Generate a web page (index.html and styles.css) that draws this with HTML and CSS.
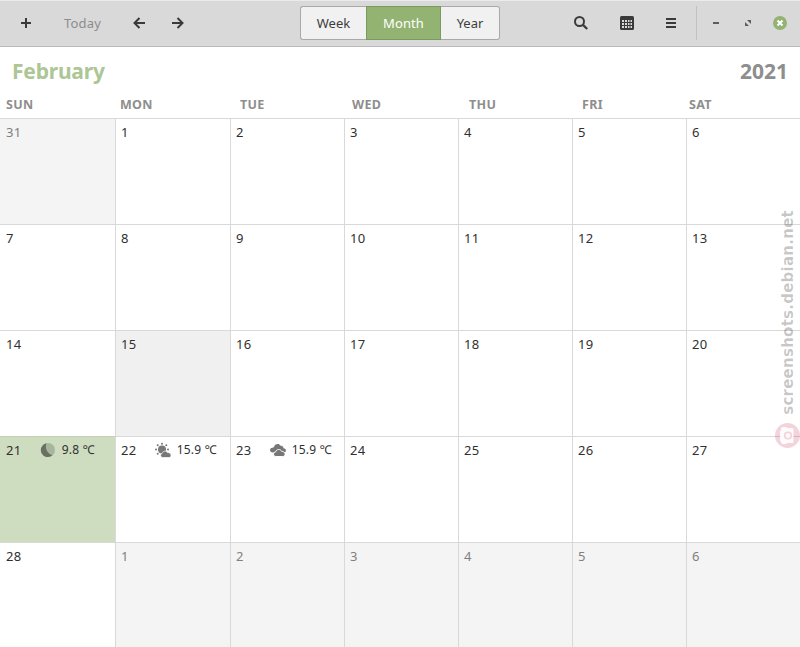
FILE: index.html
```html
<!DOCTYPE html>
<html lang="en">
<head>
    <meta charset="UTF-8">
    <meta name="viewport" content="width=device-width, initial-scale=1.0">
    <title>Calendar</title>
    <link rel="stylesheet" href="styles.css">
</head>
<body>
    <header class="toolbar">
        <div class="tools-left">
            <button class="icon-btn add" title="New event">
                <svg width="10" height="10" viewBox="0 0 10 10"><path d="M4 0h2v4h4v2H6v4H4V6H0V4h4z" fill="#3a3a3a"/></svg>
            </button>
            <button class="today">Today</button>
            <button class="icon-btn prev" title="Previous">
                <svg width="12" height="12" viewBox="0 0 12 12"><path d="M12 6H1.5M6.500 1L1.500 6l5 5" fill="none" stroke="#3a3a3a" stroke-width="2"/></svg>
            </button>
            <button class="icon-btn next" title="Next">
                <svg width="12" height="12" viewBox="0 0 12 12"><path d="M0 6h10.500M5.500 1l5 5-5 5" fill="none" stroke="#3a3a3a" stroke-width="2"/></svg>
            </button>
        </div>
        <div class="switcher">
            <button class="week">Week</button>
            <button class="month active">Month</button>
            <button class="year">Year</button>
        </div>
        <div class="tools-right">
            <button class="icon-btn search" title="Search">
                <svg width="14" height="14" viewBox="0 0 14 14"><circle cx="5.500" cy="5.500" r="4.500" fill="none" stroke="#3a3a3a" stroke-width="2"/><path d="M8.700 8.700l4.500 4.300" stroke="#3a3a3a" stroke-width="2.300"/></svg>
            </button>
            <button class="icon-btn calendars" title="Calendars">
                <svg width="14" height="14" viewBox="0 0 14 14"><rect width="14" height="14" rx="1.500" fill="#3a3a3a"/><path d="M2 4h2v2H2zM5 4h2v2H5zM8 4h1.500v2H8zM10.500 4H12v2h-1.500zM2 7h2v2H2zM5 7h2v2H5zM8 7h1.500v2H8zM10.500 7H12v2h-1.500zM2 10h2v2H2zM5 10h2v2H5zM8 10h1.500v2H8zM10.500 10H12v2h-1.500z" fill="#d9d9d9"/></svg>
            </button>
            <button class="icon-btn menu" title="Menu">
                <svg width="10" height="10" viewBox="0 0 10 10"><path d="M0 0h10v2H0zM0 4h10v2H0zM0 8h10v2H0z" fill="#3a3a3a"/></svg>
            </button>
            <span class="divider"></span>
            <button class="icon-btn minimize" title="Minimize">
                <svg width="6" height="2" viewBox="0 0 6 2"><path d="M0 0h6v2H0z" fill="#5c5c5c"/></svg>
            </button>
            <button class="icon-btn maximize" title="Maximize">
                <svg width="6" height="6" viewBox="0 0 6 6"><path d="M2 0h4v4zM0 2l4 4H0z" fill="#5c5c5c"/></svg>
            </button>
            <button class="icon-btn close" title="Close">
                <svg width="14" height="14" viewBox="0 0 14 14"><circle cx="7" cy="7" r="7" fill="#92b372"/><path d="M4.500 4.500l5 5M9.500 4.500l-5 5" stroke="#fff" stroke-width="2"/></svg>
            </button>
        </div>
    </header>

    <div class="title">
        <h1>February</h1>
        <h2>2021</h2>
    </div>

    <div class="weekdays">
        <span>SUN</span><span>MON</span><span>TUE</span><span>WED</span><span>THU</span><span>FRI</span><span>SAT</span>
    </div>

    <main class="grid">
        <div class="day other">31</div>
        <div class="day">1</div>
        <div class="day">2</div>
        <div class="day">3</div>
        <div class="day">4</div>
        <div class="day">5</div>
        <div class="day">6</div>

        <div class="day">7</div>
        <div class="day">8</div>
        <div class="day">9</div>
        <div class="day">10</div>
        <div class="day">11</div>
        <div class="day">12</div>
        <div class="day">13</div>

        <div class="day">14</div>
        <div class="day selected">15</div>
        <div class="day">16</div>
        <div class="day">17</div>
        <div class="day">18</div>
        <div class="day">19</div>
        <div class="day">20</div>

        <div class="day current">21
            <div class="weather">
                <svg width="16" height="16" viewBox="0 0 16 16"><circle cx="8" cy="8" r="7" fill="#a7b59c"/><path d="M6.500 1.200A7 7 0 1 0 12.500 13.300C7.500 12 4.500 6.500 6.500 1.200z" fill="#687062"/></svg>
                <span>9.8 ℃</span>
            </div>
        </div>
        <div class="day">22
            <div class="weather">
                <svg width="16" height="16" viewBox="0 0 16 16" fill="#777"><circle cx="7" cy="7.500" r="4"/><circle cx="7" cy="1.800" r="1"/><circle cx="2.700" cy="3.200" r="1"/><circle cx="11.300" cy="3.200" r="1"/><circle cx="1" cy="7.500" r="1"/><circle cx="13" cy="7.500" r="1"/><circle cx="2.700" cy="11.800" r="1"/><path d="M7.500 15.500a2.200 2.200 0 0 1-.3-4.300c.6-2.400 4.200-2.800 5.300-.6 2-.3 3.500 1 3.500 2.700 0 1.400-.8 2.200-2 2.200z" stroke="#fff" stroke-width=".7"/></svg>
                <span>15.9 ℃</span>
            </div>
        </div>
        <div class="day">23
            <div class="weather">
                <svg width="16" height="16" viewBox="0 0 16 16" fill="#777"><path d="M2.300 10.500a2.400 2.400 0 0 1 .2-4.800C3.500 5.700 4 5 4.300 4.300c1-2.600 5-3 6.200-.5 2-.2 3 .9 2.900 2.400 3.300.2 3.300 4.300.6 4.300z"/><path d="M5.800 14.500a2.300 2.300 0 0 1-.2-4.600c.7-3 5-3.200 6.100-.5 4.300-.2 4.300 5.100 1.100 5.100z" stroke="#fff" stroke-width="1"/></svg>
                <span>15.9 ℃</span>
            </div>
        </div>
        <div class="day">24</div>
        <div class="day">25</div>
        <div class="day">26</div>
        <div class="day">27</div>

        <div class="day">28</div>
        <div class="day other">1</div>
        <div class="day other">2</div>
        <div class="day other">3</div>
        <div class="day other">4</div>
        <div class="day other">5</div>
        <div class="day other">6</div>
    </main>

    <div class="watermark">
        <span>screenshots.debian.net</span>
        <svg width="25" height="25" viewBox="0 0 25 25"><circle cx="12.500" cy="12.500" r="12.500" fill="#c8284f" fill-opacity=".2"/><path d="M8 4h3l1 1h5q1.500 0 1.500 1.500v12q0 1.500-1.500 1.500h-5l-1 1H8q-2 0-2-2v-1H5V8h1V6q0-2 2-2z" fill="#fff" fill-opacity=".9"/><circle cx="13" cy="12.500" r="3.300" fill="none" stroke="#f3d0da" stroke-width="1.600"/></svg>
    </div>
</body>
</html>
```
FILE: styles.css
```css
* {
    margin: 0;
    padding: 0;
    box-sizing: border-box;
}
body {
    width: 800px;
    height: 647px;
    overflow: hidden;
    background: #fff;
    color: #303030;
    font-family: 'Noto Sans', sans-serif;
    font-size: 13px;
    position: relative;
}
button {
    border: none;
    background: none;
    font: inherit;
    color: inherit;
}
svg {
    display: block;
    flex: none;
}

/* toolbar */
.toolbar {
    height: 47px;
    padding-bottom: 1px;
    background: #d9d9d9;
    border-top: 1px solid #ebebeb;
    border-bottom: 1px solid #b9b9b9;
    display: grid;
    grid-template-columns: 300px 200px 300px;
    align-items: center;
}
.tools-left,
.tools-right {
    display: flex;
    align-items: center;
    height: 34px;
}
.icon-btn {
    display: flex;
    justify-content: center;
    align-items: center;
    height: 34px;
}
.add {
    width: 52px;
}
.today {
    width: 61px;
    color: #8c8c8c;
    letter-spacing: 0.2px;
}
.prev {
    width: 52px;
}
.next {
    width: 26px;
}
.switcher {
    display: flex;
    height: 34px;
}
.switcher button {
    background: #f1f1f1;
    border: 1px solid #a9a9a9;
    color: #3c3c3c;
}
.switcher .week {
    width: 66px;
    border-right: none;
    border-radius: 3px 0 0 3px;
}
.switcher .month {
    width: 75px;
    letter-spacing: 0.1px;
}
.switcher .year {
    width: 59px;
    border-left: none;
    border-radius: 0 3px 3px 0;
}
.switcher .active {
    background: #92b372;
    border-color: #7b9a5e;
    color: #fff;
}
.search {
    width: 44px;
    margin-left: 59px;
}
.calendars {
    width: 48px;
}
.menu {
    width: 40px;
}
.divider {
    width: 1px;
    height: 34px;
    margin-left: 5px;
    background: #c1c1c1;
}
.minimize {
    width: 38px;
}
.maximize {
    width: 26px;
}
.close {
    width: 38px;
}

/* month and year */
.title {
    height: 48px;
    padding: 0 12px;
    display: flex;
    justify-content: space-between;
    line-height: 48px;
}
.title h1,
.title h2 {
    font-size: 21px;
    font-weight: bold;
}
.title h1 {
    color: #adc696;
    letter-spacing: -0.2px;
}
.title h2 {
    color: #8e8e8e;
}

.weekdays {
    height: 23px;
    display: grid;
    grid-template-columns: 114px 120px 112px 117px 113px 107px 1fr;
    line-height: 19px;
    font-size: 12.5px;
    font-weight: bold;
    letter-spacing: 0.3px;
    color: #8e8e8e;
}
.weekdays span {
    padding-left: 6px;
}

/* days */
.grid {
    display: grid;
    grid-template-columns: 116px 115px 114px 114px 114px 114px 113px;
    grid-template-rows: repeat(5, 106px);
}
.day {
    display: flex;
    padding: 4px 0 0 5px;
    border-top: 1px solid #d9d9d9;
    border-right: 1px solid #d9d9d9;
    line-height: 18px;
    letter-spacing: 0.4px;
}
.day:nth-child(7n+1) {
    padding-left: 6px;
}
.day:nth-child(7n) {
    border-right: none;
}
.other {
    background: #f4f4f4;
    color: #808080;
}
.selected {
    background: #f0f0f0;
}
.current {
    background: #cedcbf;
    border-top-color: #c3cfb6;
}
.weather {
    display: flex;
    height: 16px;
    margin-top: 1px;
    margin-left: 18px;
    gap: 6px;
    align-items: center;
    font-size: 12px;
    letter-spacing: 0.2px;
}

/* watermark over the right edge */
.watermark {
    position: absolute;
    right: 0;
    top: 210px;
    width: 25px;
    height: 238px;
    display: flex;
    flex-direction: column;
    align-items: center;
    justify-content: space-between;
}
.watermark span {
    writing-mode: vertical-rl;
    transform: rotate(180deg);
    font-family: 'DejaVu Sans', sans-serif;
    font-size: 15px;
    font-weight: bold;
    letter-spacing: 0.25px;
    line-height: 21px;
    margin-left: 2px;
    color: rgba(0, 0, 0, 0.22);
}
```
